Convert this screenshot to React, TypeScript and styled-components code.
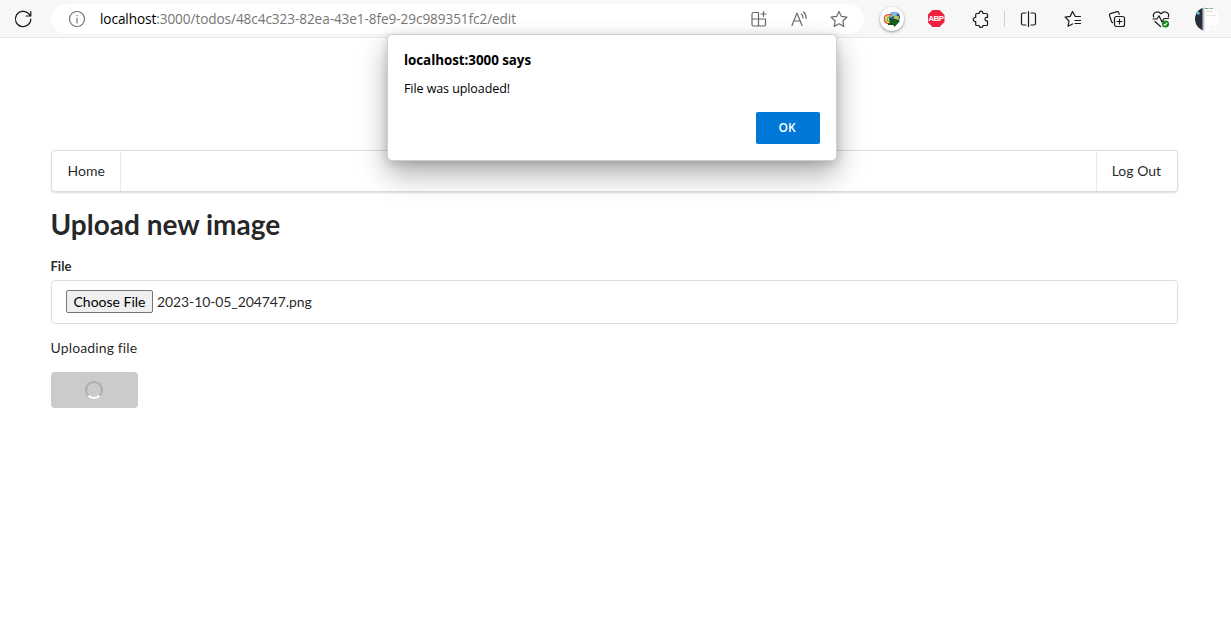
import React from "react";
import styled, { createGlobalStyle } from "styled-components";

const GlobalStyle = createGlobalStyle`
  *, *::before, *::after { box-sizing: border-box; }
  body {
    margin: 0;
    background: #fff;
    font-family: Lato, "Helvetica Neue", Arial, sans-serif;
    font-size: 14px;
    color: rgba(0, 0, 0, 0.87);
    overflow: hidden;
  }
`;

const Window = styled.div`
  position: relative;
  height: 638px;
  overflow: hidden;
`;

const Toolbar = styled.header`
  display: flex;
  align-items: center;
  height: 38px;
  background: #f7f7f7;
  border-bottom: 1px solid #e8e8e8;
`;

const IconCell = styled.span<{ $width: number }>`
  display: flex;
  flex: none;
  align-items: center;
  justify-content: center;
  width: ${(p) => p.$width}px;
  height: 30px;
`;

const Icon = styled.svg<{ $color?: string }>`
  display: block;
  width: 20px;
  height: 20px;
  fill: none;
  stroke: ${(p) => p.$color ?? "#1b1b1b"};
  stroke-width: 1.2;
  stroke-linecap: round;
  stroke-linejoin: round;
`;

const AddressBar = styled.div`
  display: flex;
  align-items: center;
  width: 813px;
  height: 30px;
  margin: 1px 6px 0 5px;
  padding: 0 5px 0 16px;
  border-radius: 15px;
  background: #fff;
`;

const Url = styled.span`
  flex: 1;
  margin-left: 13px;
  font: 13.6px/20px "Open Sans", "Noto Sans", sans-serif;
  letter-spacing: -0.08px;
  color: #767676;
  white-space: nowrap;
`;

const Host = styled.span`
  color: #000;
`;

const Extension = styled.span`
  display: flex;
  align-items: center;
  justify-content: center;
  width: 24px;
  height: 24px;
  border-radius: 50%;
  background: #fff;
  box-shadow: 0 1px 3px rgba(0, 0, 0, 0.4);
`;

const Separator = styled.span`
  flex: none;
  width: 1px;
  height: 16px;
  margin: 0 1px;
  background: #d0d0d0;
`;

const Page = styled.main`
  padding: 112px 53px 0 51px;
`;

const Menu = styled.nav`
  display: flex;
  justify-content: space-between;
  height: 42px;
  border: 1px solid rgba(34, 36, 38, 0.15);
  border-radius: 4px;
  box-shadow: 0 1px 2px rgba(34, 36, 38, 0.15);
`;

const MenuItem = styled.a<{ $side: "left" | "right" }>`
  display: flex;
  align-items: center;
  width: ${(p) => (p.$side === "left" ? 69 : 81)}px;
  padding: 0 0 2px ${(p) => (p.$side === "left" ? 15.5 : 14.7)}px;
  ${(p) => (p.$side === "left" ? "border-right" : "border-left")}: 1px solid rgba(34, 36, 38, 0.1);
  white-space: nowrap;
`;

const Title = styled.h1`
  margin: 14px 0 0 -0.5px;
  font-size: 28px;
  font-weight: 700;
  line-height: 36px;
`;

const Label = styled.label`
  display: block;
  margin: 15px 0 5px -0.5px;
  font-size: 13px;
  font-weight: 700;
  line-height: 18px;
`;

const FileField = styled.div`
  display: flex;
  align-items: center;
  gap: 4px;
  height: 44px;
  padding: 0 14px 1px;
  border: 1px solid rgba(34, 36, 38, 0.15);
  border-radius: 4px;
`;

const ChooseButton = styled.button`
  width: 87px;
  height: 23px;
  padding: 0;
  border: 1px solid #767676;
  border-radius: 2px;
  background: #efefef;
  color: #000;
  font: 14px/21px Lato, sans-serif;
  white-space: nowrap;
`;

const FileName = styled.span`
  padding-bottom: 1px;
  letter-spacing: -0.1px;
`;

const Status = styled.p`
  margin: 14px 0 14px -0.5px;
  line-height: 20px;
  letter-spacing: 0.13px;
`;

const LoadingButton = styled.button`
  display: flex;
  align-items: center;
  justify-content: center;
  width: 87px;
  height: 36px;
  padding: 0 1px 0 0;
  border: 0;
  border-radius: 4px;
  background: #cacbcd;
`;

const Spinner = styled.span`
  width: 18px;
  height: 18px;
  border: 2px solid #acadae;
  border-bottom-color: #fff;
  border-radius: 50%;
`;

const Dialog = styled.section`
  position: absolute;
  left: 387px;
  top: 34px;
  display: flex;
  flex-direction: column;
  width: 450px;
  height: 127px;
  padding: 15px 16px 16px;
  border: 1px solid #cfcfcf;
  border-radius: 5px;
  background: #fff;
  color: #000;
  font: 12.5px/20px "Open Sans", "Noto Sans", sans-serif;
  box-shadow: 0 13px 28px rgba(0, 0, 0, 0.32), 0 2px 8px rgba(0, 0, 0, 0.14);
`;

const DialogTitle = styled.h2`
  margin: 0 0 9px;
  font-size: 13.4px;
  font-weight: 700;
  line-height: 20px;
  letter-spacing: -0.05px;
`;

const Message = styled.p`
  margin: 0;
  letter-spacing: -0.08px;
`;

const OkButton = styled.button`
  align-self: flex-end;
  width: 64px;
  height: 32px;
  margin-top: 13px;
  padding: 0 2px 0 0;
  border: 0;
  border-radius: 2px;
  background: #0078d7;
  color: #fff;
  font: 600 12px/20px "Open Sans", sans-serif;
`;

const ReloadIcon = () => (
  <Icon viewBox="0 0 20 20">
    <path d="M17.8 10a7.7 7.7 0 1 1-2.3-5.5L17.8 7M17.8 2.5V7h-4.7" />
  </Icon>
);

const InfoIcon = () => (
  <Icon viewBox="0 0 20 20" $color="#737373">
    <circle cx="10" cy="10" r="7.5" />
    <path d="M10 9v5M10 6.3v.3" />
  </Icon>
);

const AppsIcon = () => (
  <Icon viewBox="0 0 20 20" $color="#6b6b6b">
    <path d="M9.5 3.5h-5A1.500 1.500 0 0 0 3 5v10.500A1.500 1.500 0 0 0 4.500 17H15a1.500 1.500 0 0 0 1.500-1.500V10H3M9.500 3.500V17M14.500 2.500v5M12 5h5" />
  </Icon>
);

const ReadAloudIcon = () => (
  <Icon viewBox="0 0 20 20" $color="#6b6b6b">
    <path d="M3 16.500 8 4l5 12.500M4.800 12h6.400M12.300 5q2 1.500 1.700 4M14.500 3q3 2.700 2.600 6.500" />
  </Icon>
);

const StarIcon = () => (
  <Icon viewBox="0 0 20 20" $color="#6b6b6b">
    <path d="m10 2.500 2.400 4.900 5.400.8-3.900 3.800.9 5.400-4.800-2.600-4.800 2.600.9-5.400-3.900-3.800 5.400-.8z" />
  </Icon>
);

const GlobeIcon = () => (
  <Icon viewBox="0 0 20 20">
    <g stroke="none">
      <circle cx="12.400" cy="8.300" r="5.600" fill="#264f9c" />
      <path d="M8.500 5c2-2.500 5.500-2.500 7.500-.5L13.500 7l-5 1z" fill="#82b7e9" />
      <path d="m13 6 4 1.500-.3 3-3.200 1-2-2z" fill="#b9cb43" />
    </g>
    <path d="M9 6C4 4.500 1.300 8 2.300 11c.6 2.200 2.700 3.500 5.200 3.600" stroke="#df4c2b" />
    <path d="M9 7.200C5 6 3 8.700 3.700 10.900c.5 1.500 2 2.500 4 2.600" stroke="#f1c232" />
    <path d="M9 8.500c-3-.7-4.500 1-3.900 2.500.4 1 1.500 1.400 3 1.500" stroke="#56aa48" />
    <path d="m7.500 10.200 3.700 1.400 1.300-1.300 4.500 1.700-4.500 5-.7-1.800-5.300.2 2.500-2.200z" fill="#13651d" stroke="#134e1a" />
  </Icon>
);

const AbpBadge = styled.span`
  display: flex;
  align-items: center;
  justify-content: center;
  width: 17px;
  height: 17px;
  background: #f0203f;
  clip-path: polygon(29% 0, 71% 0, 100% 29%, 100% 71%, 71% 100%, 29% 100%, 0 71%, 0 29%);
  color: #fff;
  font: 700 8px/17px "Liberation Sans", sans-serif;
  letter-spacing: -0.5px;
`;

const PuzzleIcon = () => (
  <Icon viewBox="0 0 20 20">
    <path d="M4.700 5.500a1 1 0 0 1 1-1h2.500c-.3-3.100 4-3.100 3.700 0h3.600a1 1 0 0 1 1 1v3c-3.300-.8-3.300 4 0 3.300v3.700a1 1 0 0 1-1 1h-3.600c.3 2.600-4 2.600-3.700 0H5.700a1 1 0 0 1-1-1v-3c-3.200.4-3.200-4.300 0-4z" />
  </Icon>
);

const SplitIcon = () => (
  <Icon viewBox="0 0 20 20">
    <path d="M9.500 2.500v15M7 4H4a1.500 1.500 0 0 0-1.500 1.500v9A1.500 1.500 0 0 0 4 16h3M12 4h3a1.500 1.500 0 0 1 1.500 1.500v9A1.500 1.500 0 0 1 15 16h-3" />
  </Icon>
);

const FavoritesIcon = () => (
  <Icon viewBox="0 0 20 20">
    <path d="M17.500 7.500h-5.200L9.500 2.500 7.300 7.300l-5.200.8L6 12l-1 5.200L9.500 15M12 11.500h5.500M12 14.500h5.500" />
  </Icon>
);

const CollectionsIcon = () => (
  <Icon viewBox="0 0 20 20">
    <rect x="7.500" y="7.500" width="10" height="10" rx="2" />
    <path d="M12.500 10v5M10 12.500h5M12.300 5.200l-.6-1.600c-.3-.8-.9-1.100-1.700-.9L3.500 4.600c-.9.300-1.300.9-1 1.800l2 6.100c.2.700.6 1.100 1.200 1.200" />
  </Icon>
);

const HealthIcon = () => (
  <Icon viewBox="0 0 20 20">
    <path d="M2.700 8C1 3.500 7 .8 10 4.800c3-4 9-1.300 7.300 3.200M2 10h4L8 6.800l3 6.200 2-3.500h4.500M4 12.500l5.500 5" />
    <circle cx="14.500" cy="15" r="3" fill="#15851b" stroke="#15851b" />
    <path d="m13 15.500 1 .7 2-2" stroke="#fff" />
  </Icon>
);

const AvatarIcon = styled.svg`
  display: block;
  width: 24px;
  height: 24px;
`;

const Avatar = () => (
  <AvatarIcon viewBox="0 0 24 24">
    <defs>
      <clipPath id="avatar-circle"><circle cx="12" cy="12" r="12" /></clipPath>
    </defs>
    <g clipPath="url(#avatar-circle)">
      <path fill="#fdfdfd" d="M0 0h24v24H0z" />
      <path fill="#252c3c" d="M0 0h8v24H0z" />
      <path fill="#c7c8ca" d="M7.500 0h2v24h-2z" />
      <path fill="#5dc7dc" d="M2 5h2.500v2.500H2z" />
      <path fill="#e9c64d" d="M13 1h3v1h-3z" />
      <path fill="#43a9d5" d="M10 1h3v1h-3zM16 1h3v1h-3z" />
      <path fill="#f3caca" d="M11 4h6v1h-6z" />
      <path fill="#e8e8e8" d="M11 8h10v1H11zM15 20h3v1h-3z" />
    </g>
  </AvatarIcon>
);

const App = () => (
  <Window>
    <GlobalStyle />
    <Toolbar>
      <IconCell $width={46}><ReloadIcon /></IconCell>
      <AddressBar>
        <InfoIcon />
        <Url><Host>localhost</Host>:3000/todos/48c4c323-82ea-43e1-8fe9-29c989351fc2/edit</Url>
        <IconCell $width={40}><AppsIcon /></IconCell>
        <IconCell $width={40}><ReadAloudIcon /></IconCell>
        <IconCell $width={40}><StarIcon /></IconCell>
      </AddressBar>
      <IconCell $width={44}><Extension><GlobeIcon /></Extension></IconCell>
      <IconCell $width={44}><AbpBadge>ABP</AbpBadge></IconCell>
      <IconCell $width={45}><PuzzleIcon /></IconCell>
      <Separator />
      <IconCell $width={45}><SplitIcon /></IconCell>
      <IconCell $width={44}><FavoritesIcon /></IconCell>
      <IconCell $width={44}><CollectionsIcon /></IconCell>
      <IconCell $width={44}><HealthIcon /></IconCell>
      <IconCell $width={48}><Avatar /></IconCell>
    </Toolbar>
    <Page>
      <Menu>
        <MenuItem $side="left">Home</MenuItem>
        <MenuItem $side="right">Log Out</MenuItem>
      </Menu>
      <Title>Upload new image</Title>
      <Label>File</Label>
      <FileField>
        <ChooseButton>Choose File</ChooseButton>
        <FileName>2023-10-05_204747.png</FileName>
      </FileField>
      <Status>Uploading file</Status>
      <LoadingButton aria-label="Uploading"><Spinner /></LoadingButton>
    </Page>
    <Dialog role="alertdialog">
      <DialogTitle>localhost:3000 says</DialogTitle>
      <Message>File was uploaded!</Message>
      <OkButton>OK</OkButton>
    </Dialog>
  </Window>
);

export default App;
